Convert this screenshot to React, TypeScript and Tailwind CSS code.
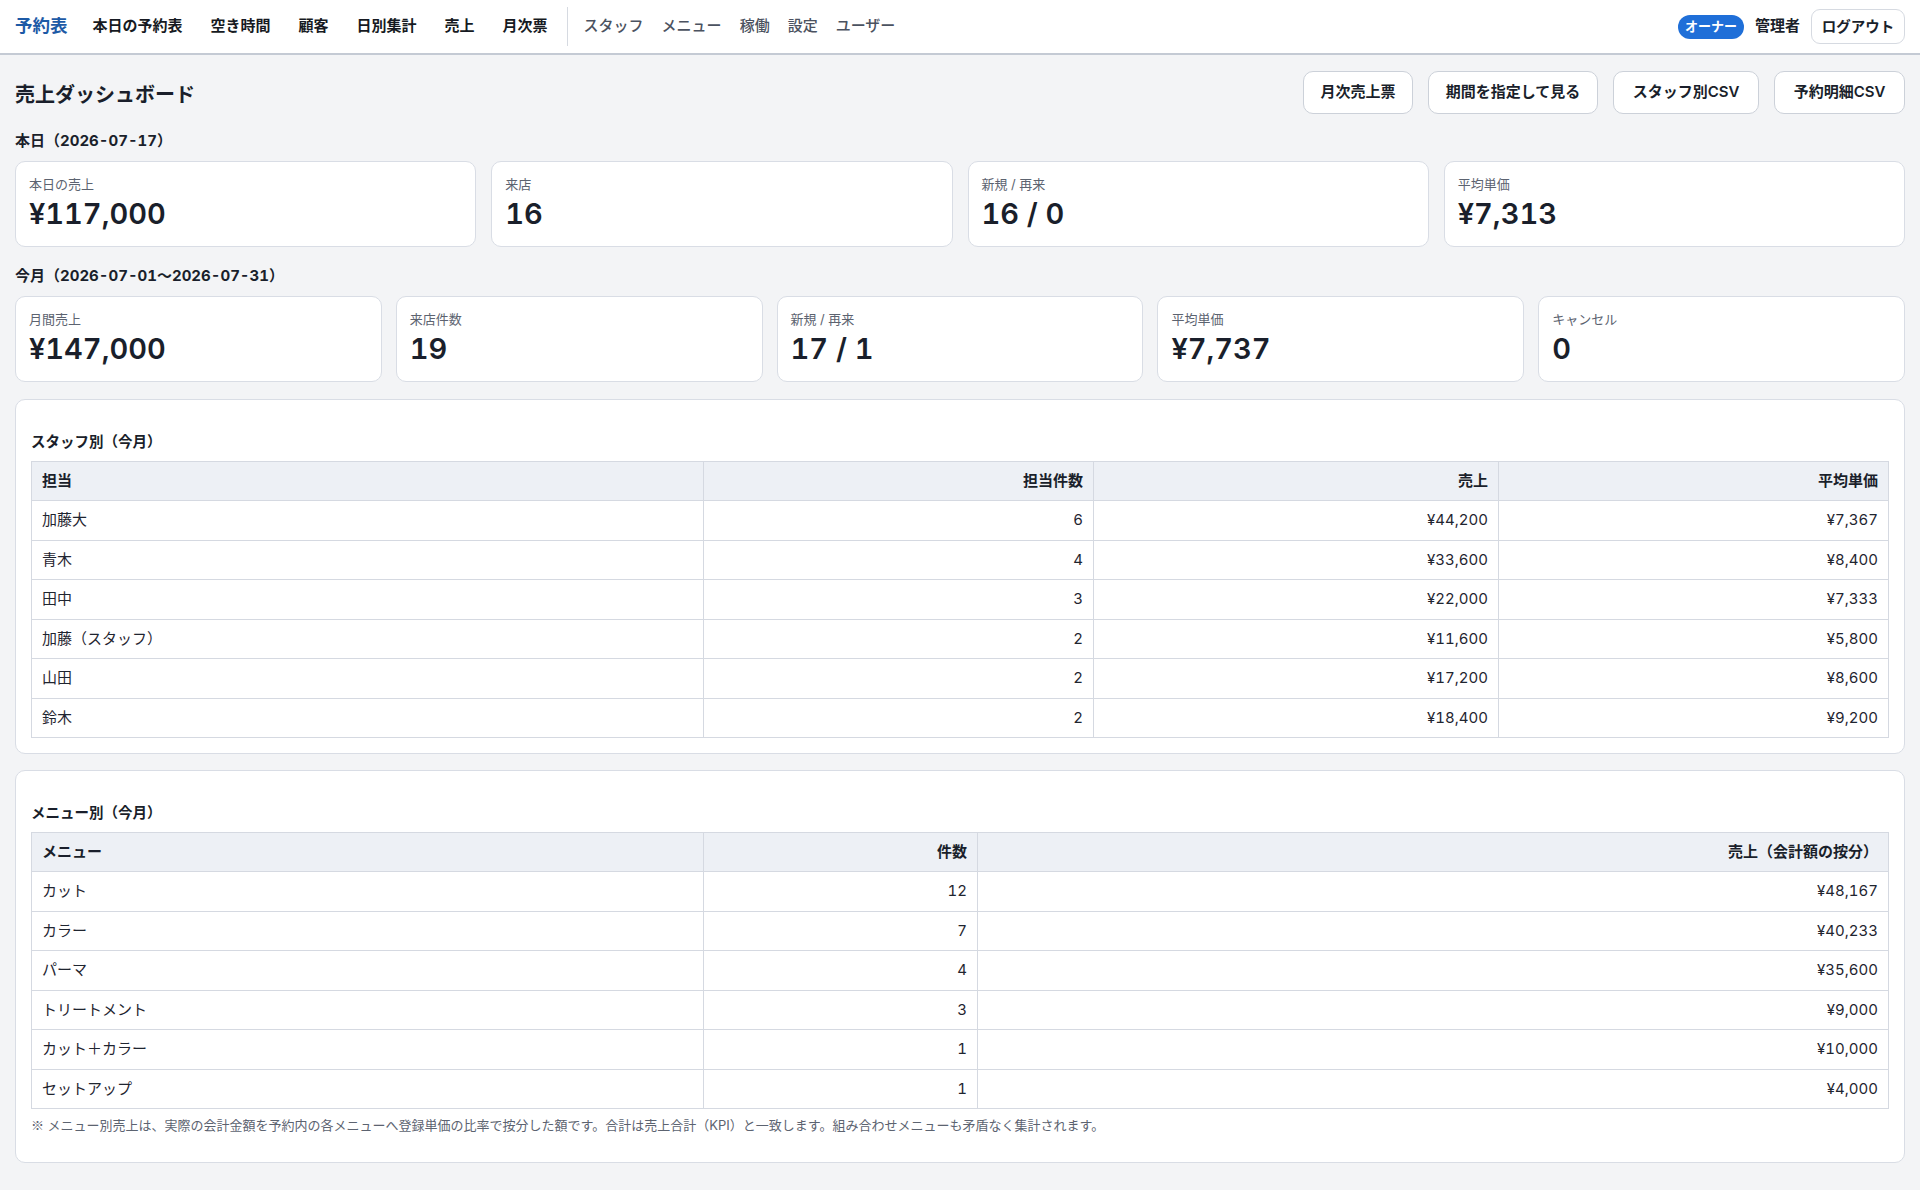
import React from "react";

const font = { fontFamily: 'Inter, "Noto Sans CJK JP", "Noto Sans", sans-serif' };
const cjk = { fontFamily: '"Noto Sans CJK JP", sans-serif' };

const navMain = ["本日の予約表", "空き時間", "顧客", "日別集計", "売上", "月次票"];
const navSub = ["スタッフ", "メニュー", "稼働", "設定", "ユーザー"];

const today = [
  { label: "本日の売上", value: "¥117,000" },
  { label: "来店", value: "16" },
  { label: "新規 / 再来", value: "16 / 0" },
  { label: "平均単価", value: "¥7,313" },
];

const month = [
  { label: "月間売上", value: "¥147,000" },
  { label: "来店件数", value: "19" },
  { label: "新規 / 再来", value: "17 / 1" },
  { label: "平均単価", value: "¥7,737" },
  { label: "キャンセル", value: "0" },
];

const staff = [
  ["加藤大", "6", "¥44,200", "¥7,367"],
  ["青木", "4", "¥33,600", "¥8,400"],
  ["田中", "3", "¥22,000", "¥7,333"],
  ["加藤（スタッフ）", "2", "¥11,600", "¥5,800"],
  ["山田", "2", "¥17,200", "¥8,600"],
  ["鈴木", "2", "¥18,400", "¥9,200"],
];

const menus = [
  ["カット", "12", "¥48,167"],
  ["カラー", "7", "¥40,233"],
  ["パーマ", "4", "¥35,600"],
  ["トリートメント", "3", "¥9,000"],
  ["カット＋カラー", "1", "¥10,000"],
  ["セットアップ", "1", "¥4,000"],
];

function KpiCard({ label, value }: { label: string; value: string }) {
  return (
    <div className="h-[86px] bg-white border border-[#d9dde5] rounded-[10px] px-[13px] pt-[13px]">
      <div className="text-[13px] leading-[18px] text-[#5c6370]">{label}</div>
      <div className="text-[29px] leading-[36px] font-semibold text-[#1a1f2b] mt-[3px]">{value}</div>
    </div>
  );
}

const th = "border border-[#d5d9e1] bg-[#edf0f5] px-2.5 py-2 text-[15px] leading-[22px] font-bold text-[#1a1f2b]";
const td = "border border-[#d5d9e1] px-2.5 py-2 text-[15px] leading-[22.5px] text-[#1f2530]";

export default function App() {
  return (
    <div style={font} className="min-h-screen bg-[#f3f4f6] text-[#1a1f2b] tabular-nums">
      {/* ナビ */}
      <nav className="h-[55px] bg-white border-b-2 border-[#c4cad4] flex items-center justify-between px-[15px]">
        <div className="flex items-center">
          <span className="text-[17.5px] font-semibold text-[#1d5aa6] mr-[25px]">予約表</span>
          <div className="flex items-center gap-[28px]">
            {navMain.map((n) => (
              <span key={n} className="text-[15px] font-semibold text-[#161a22]">{n}</span>
            ))}
          </div>
          <div className="w-px h-[39px] bg-[#d6dae1] ml-[19px] mr-[16px]" />
          <div className="flex items-center gap-[18px]">
            {navSub.map((n) => (
              <span key={n} className="text-[15px] font-medium text-[#4b5260]">{n}</span>
            ))}
          </div>
        </div>
        <div className="flex items-center">
          <span className="h-[24px] w-[66px] rounded-full bg-[#1f6fd8] text-white text-[13px] font-bold flex items-center justify-center">
            オーナー
          </span>
          <span className="text-[15px] font-semibold ml-[11px] mr-[11px]">管理者</span>
          <button className="h-[35px] w-[94px] bg-white border border-[#d6dae1] rounded-[9px] text-[14.5px] font-semibold">
            ログアウト
          </button>
        </div>
      </nav>

      <main className="px-[15px] pt-4 pb-[29px]">
        {/* ヘッダー */}
        <div className="h-[43px] flex items-center justify-between">
          <h1 className="text-[20px] font-bold pt-[4px]">売上ダッシュボード</h1>
          <div className="flex gap-[15px]">
            {[
              ["月次売上票", "w-[110px]"],
              ["期間を指定して見る", "w-[170px]"],
              ["スタッフ別CSV", "w-[146px]"],
              ["予約明細CSV", "w-[131px]"],
            ].map(([t, w]) => (
              <button
                key={t}
                className={`${w} h-[43px] bg-white border border-[#ccd1d9] rounded-[10px] text-[15px] font-semibold`}
              >
                {t}
              </button>
            ))}
          </div>
        </div>

        {/* 本日 */}
        <h2 className="mt-4 mb-[9px] text-[15px] leading-[22px] font-bold">本日（2026-07-17）</h2>
        <div className="grid grid-cols-4 gap-[15px]">
          {today.map((k) => (
            <KpiCard key={k.label} {...k} />
          ))}
        </div>

        {/* 今月 */}
        <h2 className="mt-[18px] mb-[9px] text-[15px] leading-[22px] font-bold">今月（2026-07-01〜2026-07-31）</h2>
        <div className="grid grid-cols-5 gap-[14px]">
          {month.map((k) => (
            <KpiCard key={k.label} {...k} />
          ))}
        </div>

        {/* スタッフ別 */}
        <section className="mt-[17px] bg-white border border-[#d9dde5] rounded-[10px] px-[15px] pt-[31px] pb-[15px]">
          <h3 className="text-[14.5px] leading-[21px] font-bold mb-[9px]">スタッフ別（今月）</h3>
          <table className="w-full table-fixed border-collapse">
            <colgroup>
              <col className="w-[672px]" />
              <col className="w-[390px]" />
              <col className="w-[405px]" />
              <col />
            </colgroup>
            <thead>
              <tr>
                <th className={`${th} text-left`}>担当</th>
                <th className={`${th} text-right`}>担当件数</th>
                <th className={`${th} text-right`}>売上</th>
                <th className={`${th} text-right`}>平均単価</th>
              </tr>
            </thead>
            <tbody>
              {staff.map((r) => (
                <tr key={r[0]}>
                  <td className={td}>{r[0]}</td>
                  <td className={`${td} text-right`}>{r[1]}</td>
                  <td className={`${td} text-right`}>{r[2]}</td>
                  <td className={`${td} text-right`}>{r[3]}</td>
                </tr>
              ))}
            </tbody>
          </table>
        </section>

        {/* メニュー別 */}
        <section className="mt-4 bg-white border border-[#d9dde5] rounded-[10px] px-[15px] pt-[31px] pb-[27px]">
          <h3 className="text-[14.5px] leading-[21px] font-bold mb-[9px]">メニュー別（今月）</h3>
          <table className="w-full table-fixed border-collapse">
            <colgroup>
              <col className="w-[672px]" />
              <col className="w-[274px]" />
              <col />
            </colgroup>
            <thead>
              <tr>
                <th className={`${th} text-left`}>メニュー</th>
                <th className={`${th} text-right`}>件数</th>
                <th className={`${th} text-right`}>売上（会計額の按分）</th>
              </tr>
            </thead>
            <tbody>
              {menus.map((r) => (
                <tr key={r[0]}>
                  <td className={td}>{r[0]}</td>
                  <td className={`${td} text-right`}>{r[1]}</td>
                  <td className={`${td} text-right`}>{r[2]}</td>
                </tr>
              ))}
            </tbody>
          </table>
          <p className="mt-[6px] text-[13px] leading-[19px] text-[#5c6370]">
            <span style={cjk}>※</span> メニュー別売上は、実際の会計金額を予約内の各メニューへ登録単価の比率で按分した額です。合計は売上合計（KPI）と一致します。組み合わせメニューも矛盾なく集計されます。
          </p>
        </section>
      </main>
    </div>
  );
}
